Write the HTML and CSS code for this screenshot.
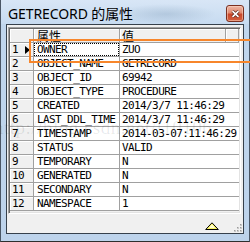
FILE: index.html
```html
<!DOCTYPE html>
<html lang="zh-CN">
<head>
  <meta charset="UTF-8">
  <meta name="viewport" content="width=device-width, initial-scale=1.0">
  <title>GETRECORD 的属性</title>
  <link rel="stylesheet" href="styles.css">
</head>
<body>
  <div class="page">
    <div class="window">
      <div class="titlebar">
        <span class="title">GETRECORD 的属性</span>
        <div class="close">
          <svg width="9" height="8" viewBox="0 0 9 8">
            <path d="M1.5 1.2l6 5.6m0-5.6l-6 5.6" stroke="#5a2418" stroke-width="3.2" fill="none"/>
            <path d="M1.5 1.2l6 5.6m0-5.6l-6 5.6" stroke="#fff" stroke-width="1.7" fill="none"/>
          </svg>
        </div>
      </div>

      <div class="client">
        <div class="grid">
          <div class="head">
            <div class="hcell"></div>
            <div class="hcell">属性</div>
            <div class="hcell">值</div>
            <div class="hcell"></div>
          </div>
          <div class="row current">
            <div class="num">1<span class="arrow"></span></div>
            <div class="name"><span class="focus">OWNER</span></div>
            <div class="val">ZUO</div>
          </div>
          <div class="row"><div class="num">2</div><div class="name">OBJECT_NAME</div><div class="val">GETRECORD</div></div>
          <div class="row"><div class="num">3</div><div class="name">OBJECT_ID</div><div class="val">69942</div></div>
          <div class="row"><div class="num">4</div><div class="name">OBJECT_TYPE</div><div class="val">PROCEDURE</div></div>
          <div class="row"><div class="num">5</div><div class="name">CREATED</div><div class="val">2014/3/7 11:46:29</div></div>
          <div class="row"><div class="num">6</div><div class="name">LAST_DDL_TIME</div><div class="val">2014/3/7 11:46:29</div></div>
          <div class="row"><div class="num">7</div><div class="name">TIMESTAMP</div><div class="val">2014-03-07:11:46:29</div></div>
          <div class="row"><div class="num">8</div><div class="name">STATUS</div><div class="val">VALID</div></div>
          <div class="row"><div class="num">9</div><div class="name">TEMPORARY</div><div class="val">N</div></div>
          <div class="row"><div class="num">10</div><div class="name">GENERATED</div><div class="val">N</div></div>
          <div class="row"><div class="num">11</div><div class="name">SECONDARY</div><div class="val">N</div></div>
          <div class="row"><div class="num">12</div><div class="name">NAMESPACE</div><div class="val">1</div></div>
        </div>

        <div class="footer">
          <svg class="collapse" width="14" height="8" viewBox="0 0 14 8">
            <path d="M7 0.8L13.3 7.5H0.7Z" fill="#fbf56a" stroke="#000" stroke-width="1"/>
            <path d="M7 2.5L10 6H4Z" fill="#ffffd8"/>
          </svg>
          <svg class="grip" width="8" height="8" viewBox="0 0 8 8">
            <rect x="6" y="0" width="2" height="2" fill="#c8c8c8"/>
            <rect x="6" y="3" width="2" height="2" fill="#c8c8c8"/>
            <rect x="3" y="3" width="2" height="2" fill="#c8c8c8"/>
            <rect x="6" y="6" width="2" height="2" fill="#c8c8c8"/>
            <rect x="3" y="6" width="2" height="2" fill="#c8c8c8"/>
            <rect x="0" y="6" width="2" height="2" fill="#c8c8c8"/>
            <rect x="6" y="0" width="1" height="1" fill="#9c9c9c"/>
            <rect x="6" y="3" width="1" height="1" fill="#9c9c9c"/>
            <rect x="3" y="3" width="1" height="1" fill="#9c9c9c"/>
            <rect x="6" y="6" width="1" height="1" fill="#9c9c9c"/>
            <rect x="3" y="6" width="1" height="1" fill="#9c9c9c"/>
            <rect x="0" y="6" width="1" height="1" fill="#9c9c9c"/>
          </svg>
        </div>
      </div>
    </div>

    <div class="watermark">http://blog.csdn.net/l10106</div>
    <div class="mark"></div>
  </div>
</body>
</html>
```

FILE: styles.css
```css
/* page */
body {
  margin: 0;
  background-color: #fff;
  font-family: "Noto Sans", "Noto Sans CJK SC", sans-serif;
}

.page {
  position: relative;
  width: 250px;
  height: 242px;
  overflow: hidden;
}

/* window frame */
.window {
  box-sizing: border-box;
  width: 250px;
  height: 242px;
  padding: 0 5px 7px;
  border: 1px solid #4a5665;
  border-top: none;
  border-bottom-color: #2e2e2e;
  background:
    radial-gradient(ellipse 50px 10px at 165px 14px, rgba(110, 140, 170, 0.28), transparent),
    linear-gradient(to bottom, #d8e6f6 0, #c7dbf0 24px, #c0d6ed 24px, #bdd3eb 100%);
}

.titlebar {
  height: 24px;
  display: flex;
  justify-content: space-between;
  align-items: flex-start;
}

.title {
  padding-left: 2px;
  margin-top: 2px;
  font-size: 14px;
  line-height: 24px;
  color: #000;
  letter-spacing: -0.1px;
}

.close {
  box-sizing: border-box;
  width: 18px;
  height: 17px;
  margin-top: 5px;
  border: 1px solid #7a2f20;
  border-radius: 3px;
  background: linear-gradient(to bottom, #eeb7a6 0, #e08a70 45%, #c9472b 55%, #d4603e 100%);
  box-shadow: inset 0 0 0 1px rgba(255, 220, 200, 0.5);
  display: flex;
  align-items: center;
  justify-content: center;
}

.client {
  box-sizing: border-box;
  height: 210px;
  border: 1px solid #36404b;
  background-color: #f0f0f0;
  display: flex;
  flex-direction: column;
}

/* property grid */
.grid {
  box-sizing: border-box;
  width: 233px;
  height: 187px;
  margin: 2px 0 0 1px;
  padding: 1px;
  border: 1px solid;
  border-color: #a0a0a0 #fff #fff #a0a0a0;
  box-shadow: inset 1px 1px #696969, inset -1px -1px #e3e3e3;
  background-color: #f0f0f0;
  font-family: "DejaVu Sans Mono", monospace;
  font-size: 11px;
  letter-spacing: -0.6px;
  color: #000;
}

.head {
  display: grid;
  grid-template-columns: 24px 86px 106px 13px;
  height: 14px;
}

.hcell {
  box-sizing: border-box;
  border-right: 1px solid #a0a0a0;
  border-bottom: 1px solid #a0a0a0;
  box-shadow: inset 1px 1px #fff;
  padding-left: 3px;
  font-family: "Noto Sans CJK SC", sans-serif;
  font-size: 12px;
  line-height: 13px;
  letter-spacing: 0;
}

.hcell:nth-child(3) {
  padding-left: 2px;
}

.row {
  display: grid;
  grid-template-columns: 24px 86px 119px;
  height: 14px;
  line-height: 13px;
}

.num,
.name,
.val {
  box-sizing: border-box;
  border-bottom: 1px solid #a0a0a0;
  white-space: nowrap;
}

.num {
  display: flex;
  justify-content: space-between;
  align-items: center;
  padding-left: 2px;
  background-color: #f0f0f0;
  border-right: 1px solid #a0a0a0;
  box-shadow: inset 1px 1px #fff;
}

.arrow {
  width: 0;
  height: 0;
  margin-right: 3px;
  border-left: 5px solid #000;
  border-top: 4px solid transparent;
  border-bottom: 4px solid transparent;
}

.name {
  padding-left: 3px;
  background-color: #fff;
  border-right: 1px solid #a0a0a0;
}

.val {
  padding-left: 2px;
  background-color: #fff;
}

.current .name {
  padding: 1px;
}

.focus {
  display: block;
  height: 11px;
  line-height: 11px;
  padding-left: 2px;
  outline: 1px dotted #000;
}

/* bottom bar */
.footer {
  flex: 1;
  display: flex;
  justify-content: flex-end;
  align-items: flex-start;
  padding-right: 1px;
}

.collapse {
  margin-top: 8px;
  margin-right: 15px;
}

.grip {
  align-self: flex-end;
  margin-bottom: 1px;
}

/* overlays */
.watermark {
  position: absolute;
  left: -6px;
  top: 117px;
  font-family: "Liberation Serif", serif;
  font-size: 19px;
  letter-spacing: 0.5px;
  color: rgba(0, 0, 0, 0.09);
  white-space: nowrap;
}

.mark {
  position: absolute;
  left: 29px;
  top: 39px;
  width: 240px;
  height: 24px;
  box-sizing: border-box;
  border: 2px solid #f7862b;
}
```
